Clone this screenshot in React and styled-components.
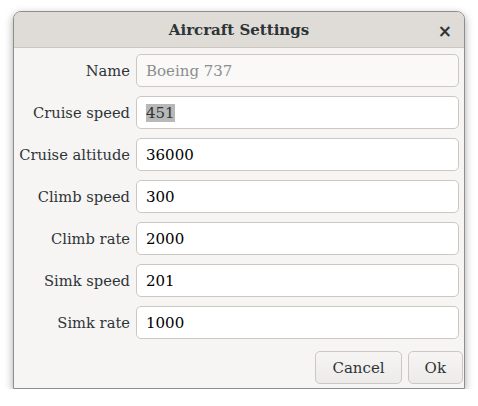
import React from "react";
import styled, { createGlobalStyle } from "styled-components";

const Global = createGlobalStyle`
  html, body { margin: 0; padding: 0; background: #ffffff; }
  body { font-family: "DejaVu Serif", serif; }
`;

const Stage = styled.div`
  padding: 11px 0 0 13px;
`;

const Window = styled.div`
  width: 452px;
  height: 378px;
  box-sizing: border-box;
  border: 1px solid #8e8e8c;
  border-radius: 8px 8px 0 0;
  background: #f6f5f4;
  box-shadow: 0 3px 9px rgba(0, 0, 0, 0.35);
  display: flex;
  flex-direction: column;
  overflow: hidden;
`;

const Header = styled.div`
  height: 36px;
  flex: none;
  box-sizing: border-box;
  background: #dfdcd8;
  border-bottom: 1px solid #cdc7c2;
  display: flex;
  align-items: center;
  justify-content: center;
  position: relative;
  font-weight: bold;
  font-size: 15px;
  color: #2e3436;
`;

const Close = styled.span`
  position: absolute;
  right: 12px;
  top: 9px;
  font-size: 17px;
  font-family: "DejaVu Sans", sans-serif;
  font-weight: bold;
  color: #2e3436;
`;

const Body = styled.div`
  padding: 6px 5px 5px 5px;
  display: flex;
  flex-direction: column;
  gap: 12px;
`;

const Form = styled.div`
  display: grid;
  grid-template-columns: 111px 1fr;
  column-gap: 6px;
  row-gap: 9px;
  align-items: center;
`;

const Label = styled.div`
  text-align: right;
  font-size: 14.7px;
  color: #2e3436;
  white-space: nowrap;
`;

const Entry = styled.div`
  height: 33px;
  box-sizing: border-box;
  border: 1px solid #cdc7c2;
  border-radius: 5px;
  background: ${(p) => (p.$disabled ? "#faf9f8" : "#ffffff")};
  color: ${(p) => (p.$disabled ? "#8b8e8f" : "#000000")};
  font-size: 15px;
  padding: 0 9px;
  display: flex;
  align-items: center;
`;

const Selected = styled.span`
  background: #b8b8b8;
  color: #2e3436;
`;

const Actions = styled.div`
  display: flex;
  justify-content: flex-end;
  gap: 6px;
  margin-right: -4px;
`;

const Button = styled.button`
  height: 33px;
  box-sizing: border-box;
  padding: 0 ${(p) => p.$pad}px;
  border: 1px solid #cdc7c2;
  border-radius: 5px;
  background: linear-gradient(#f6f5f4, #edebe9);
  font-family: "DejaVu Serif", serif;
  font-size: 15px;
  color: #2e3436;
`;

const fields = [
  { label: "Name", value: "Boeing 737", disabled: true },
  { label: "Cruise speed", value: "451", selected: true },
  { label: "Cruise altitude", value: "36000" },
  { label: "Climb speed", value: "300" },
  { label: "Climb rate", value: "2000" },
  { label: "Simk speed", value: "201" },
  { label: "Simk rate", value: "1000" },
];

export default function App() {
  return (
    <>
      <Global />
      <Stage>
        <Window>
          <Header>
            Aircraft Settings
            <Close>×</Close>
          </Header>
          <Body>
            <Form>
              {fields.map((f) => (
                <React.Fragment key={f.label}>
                  <Label>{f.label}</Label>
                  <Entry $disabled={f.disabled}>
                    {f.selected ? <Selected>{f.value}</Selected> : f.value}
                  </Entry>
                </React.Fragment>
              ))}
            </Form>
            <Actions>
              <Button $pad={16}>Cancel</Button>
              <Button $pad={16}>Ok</Button>
            </Actions>
          </Body>
        </Window>
      </Stage>
    </>
  );
}
